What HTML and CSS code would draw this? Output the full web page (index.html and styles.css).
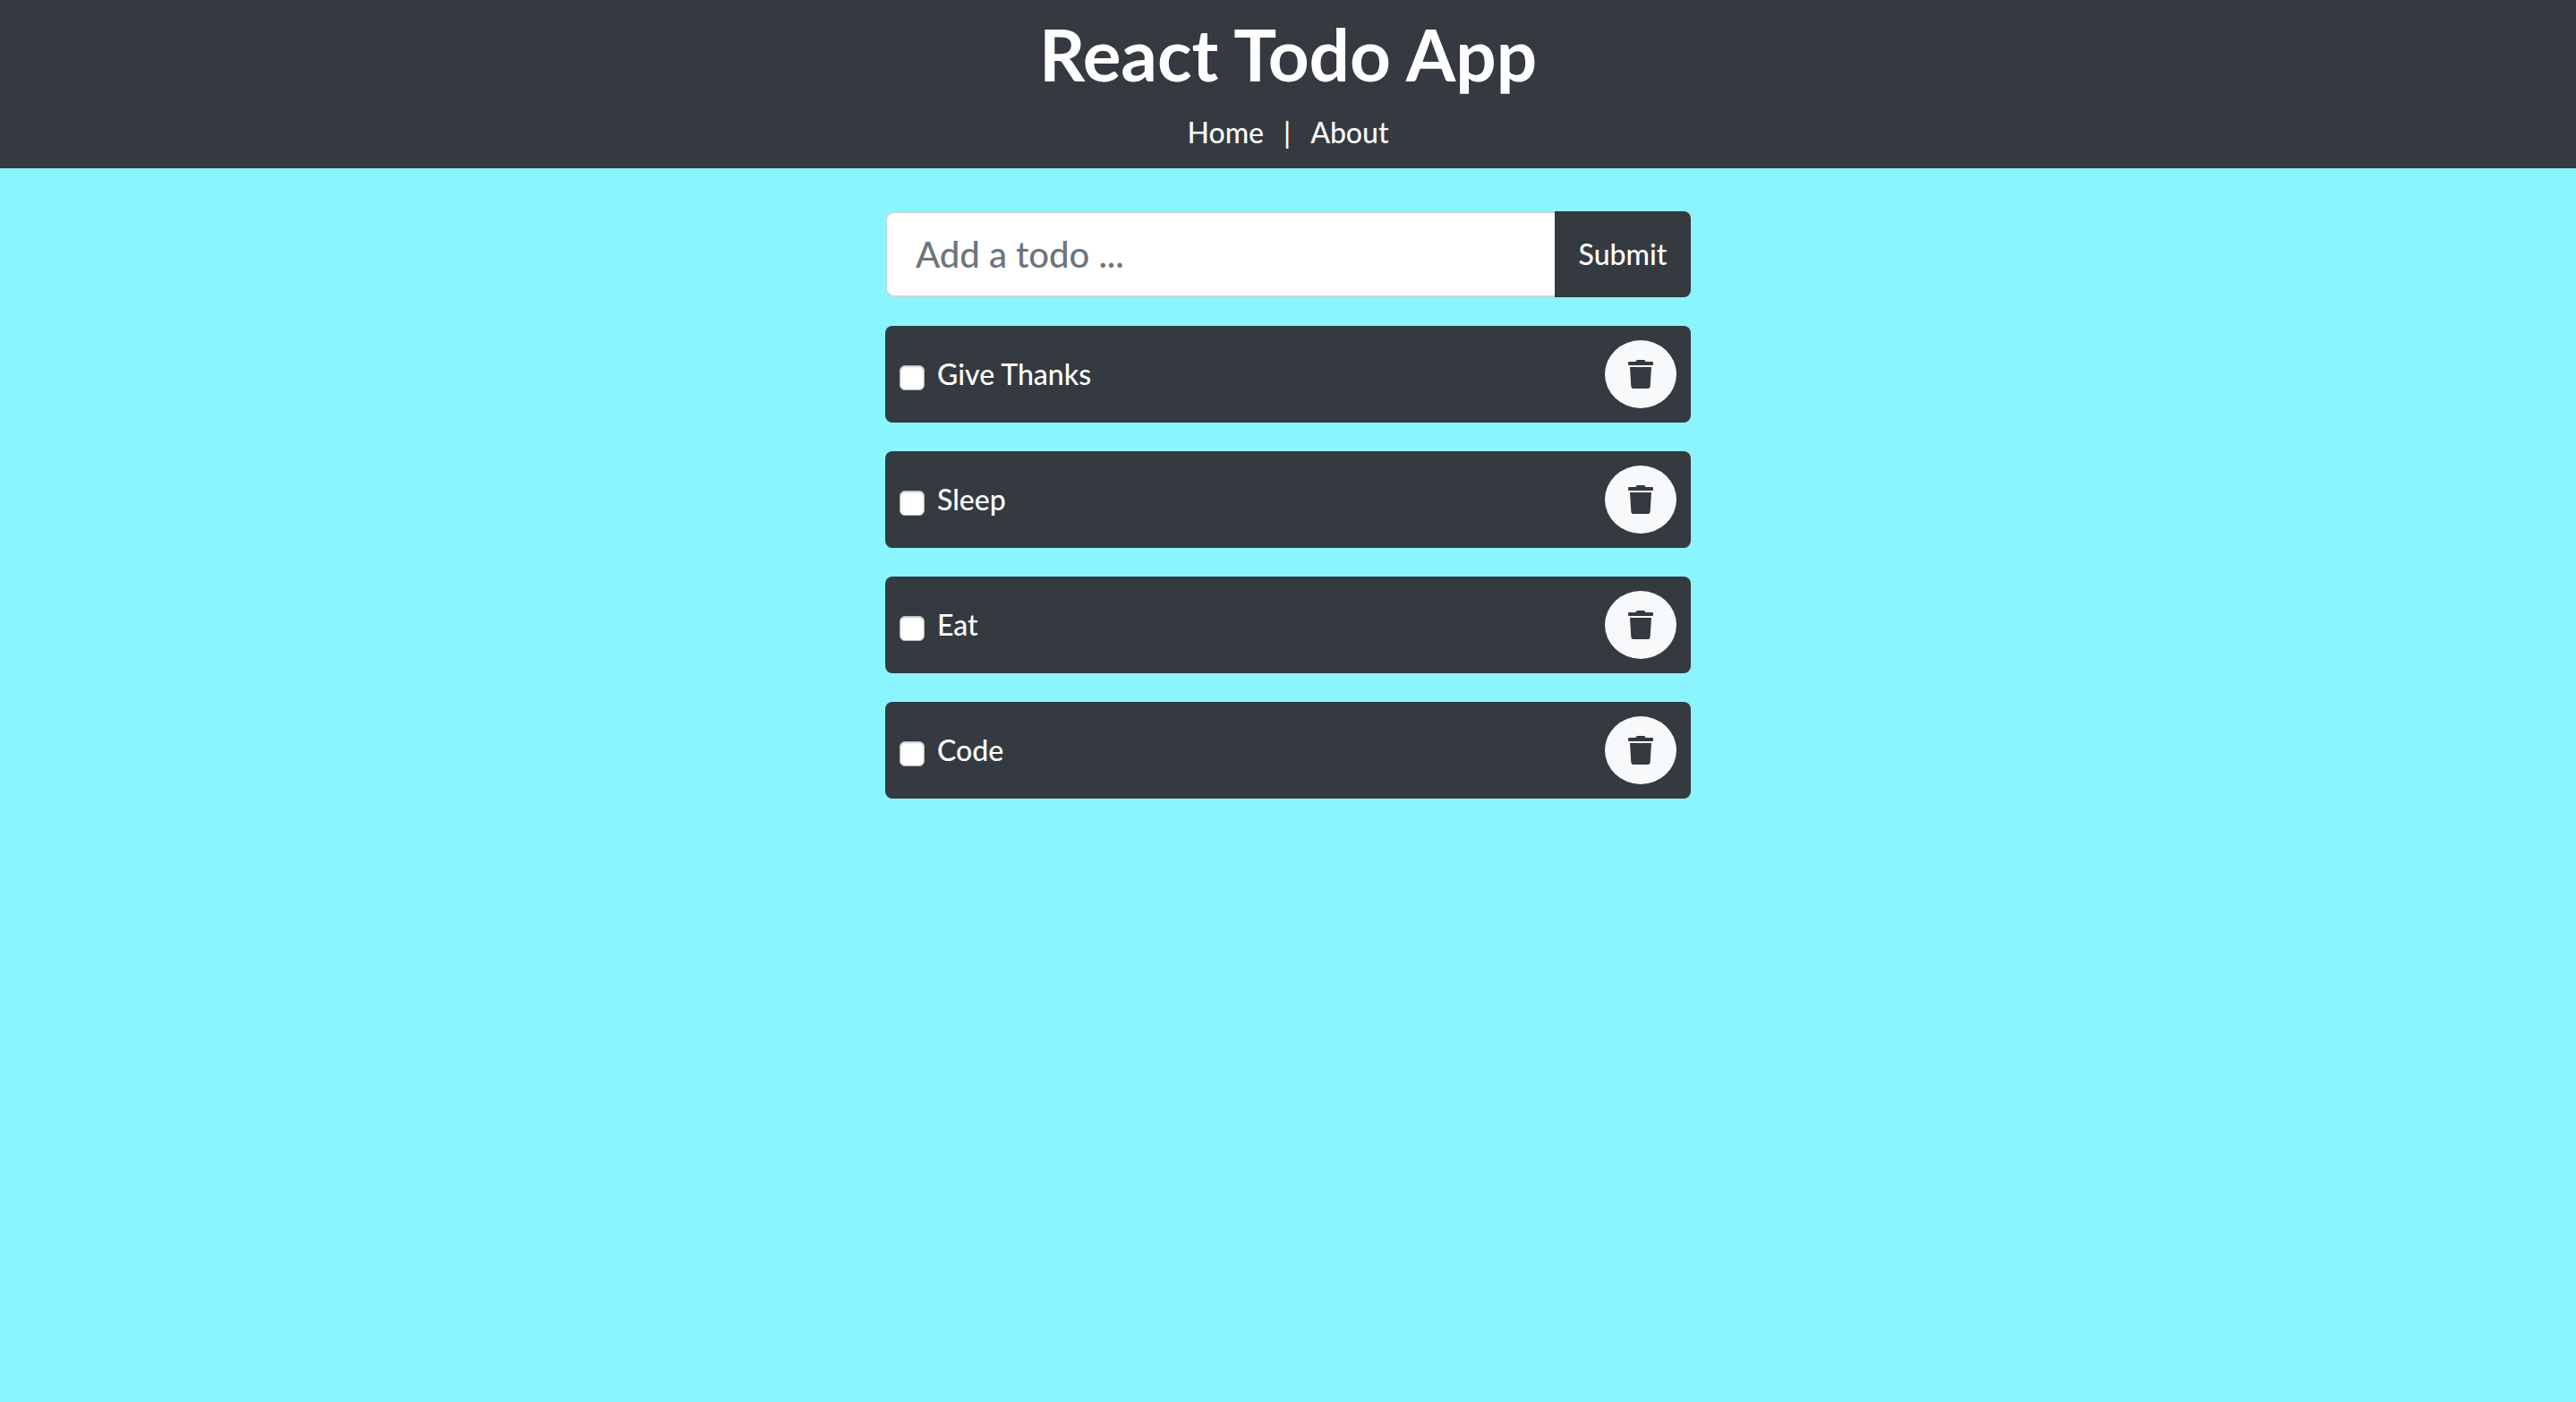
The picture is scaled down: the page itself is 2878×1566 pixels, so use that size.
FILE: index.html
```html
<!DOCTYPE html>
<html lang="en">
<head>
<meta charset="utf-8">
<meta name="viewport" content="width=device-width, initial-scale=1">
<title>React Todo App</title>
<link rel="stylesheet" href="styles.css">
</head>
<body>
<svg class="sprite" aria-hidden="true">
  <symbol id="trash" viewBox="0 0 448 512">
    <path d="M432 32H312l-9.400-18.700A24 24 0 0 0 281.100 0H166.800a23.720 23.720 0 0 0-21.400 13.300L136 32H16A16 16 0 0 0 0 48v32a16 16 0 0 0 16 16h416a16 16 0 0 0 16-16V48a16 16 0 0 0-16-16zM53.200 467a48 48 0 0 0 47.900 45h245.800a48 48 0 0 0 47.900-45L416 128H32z"/>
  </symbol>
</svg>
<header class="header">
  <h1 class="title">React Todo App</h1>
  <nav class="nav">
    <a href="#home">Home</a>
    <span>|</span>
    <a href="#about">About</a>
  </nav>
</header>
<main class="container">
  <form class="add-form">
    <input class="add-input" type="text" placeholder="Add a todo ..." aria-label="Add a todo">
    <button class="add-button" type="submit">Submit</button>
  </form>
  <ul class="todos">
    <li class="todo">
      <label class="todo-label"><input class="check" type="checkbox"><span>Give Thanks</span></label>
      <button class="delete" type="button" aria-label="Delete Give Thanks"><svg class="icon"><use href="#trash"/></svg></button>
    </li>
    <li class="todo">
      <label class="todo-label"><input class="check" type="checkbox"><span>Sleep</span></label>
      <button class="delete" type="button" aria-label="Delete Sleep"><svg class="icon"><use href="#trash"/></svg></button>
    </li>
    <li class="todo">
      <label class="todo-label"><input class="check" type="checkbox"><span>Eat</span></label>
      <button class="delete" type="button" aria-label="Delete Eat"><svg class="icon"><use href="#trash"/></svg></button>
    </li>
    <li class="todo">
      <label class="todo-label"><input class="check" type="checkbox"><span>Code</span></label>
      <button class="delete" type="button" aria-label="Delete Code"><svg class="icon"><use href="#trash"/></svg></button>
    </li>
  </ul>
</main>
</body>
</html>
```
FILE: styles.css
```css
:root {
  --dark: #343a40;
  --light: #f8f9fa;
}

* {
  box-sizing: border-box;
}

body {
  margin: 0;
  background: #8af5ff;
  color: #fff;
  font-family: Lato, "Open Sans", sans-serif;
  font-size: 32px;
  font-weight: 500;
  line-height: 48px;
}

.sprite {
  display: none;
}

.header {
  padding: 12px 16px 16px;
  background: var(--dark);
  text-align: center;
}

.title {
  margin: 0 0 16px;
  font-size: 80px;
  font-weight: 700;
  line-height: 96px;
}

.nav {
  display: flex;
  justify-content: center;
  gap: 22px;
}

.nav a {
  color: var(--light);
  text-decoration: none;
}

.container {
  max-width: 900px;
  margin: 48px auto;
}

.add-form {
  display: flex;
  margin-bottom: 32px;
}

.add-input {
  flex: 1;
  min-width: 0;
  height: 96px;
  padding: 0 32px;
  border: 2px solid #ced4da;
  border-right: 0;
  border-radius: 10px 0 0 10px;
  background: #fff;
  color: #495057;
  font: inherit;
  font-size: 40px;
}

.add-input::placeholder {
  color: #6c757d;
  opacity: 1;
}

.add-button {
  min-width: 152px;
  padding: 0 24px;
  border: 0;
  border-radius: 0 8px 8px 0;
  background: var(--dark);
  color: #fff;
  font: inherit;
}

.todos {
  display: grid;
  gap: 32px;
  margin: 0;
  padding: 0;
  list-style: none;
}

.todo {
  display: flex;
  align-items: center;
  justify-content: space-between;
  padding: 16px;
  border-radius: 8px;
  background: var(--dark);
}

.todo-label {
  display: flex;
  align-items: center;
  gap: 14px;
}

.check {
  appearance: none;
  width: 28px;
  height: 28px;
  margin: 8px 0 0;
  border: 1px solid #b5b7b9;
  border-radius: 6px;
  background: #fff;
  box-shadow: inset 0 1px 2px #ccc;
}

.check:checked {
  background: #0075ff;
}

.delete {
  display: grid;
  place-items: center;
  width: 80px;
  height: 76px;
  padding: 0;
  border: 0;
  border-radius: 50%;
  background: var(--light);
  color: var(--dark);
}

.icon {
  width: 28px;
  height: 32px;
  fill: currentColor;
}
```
